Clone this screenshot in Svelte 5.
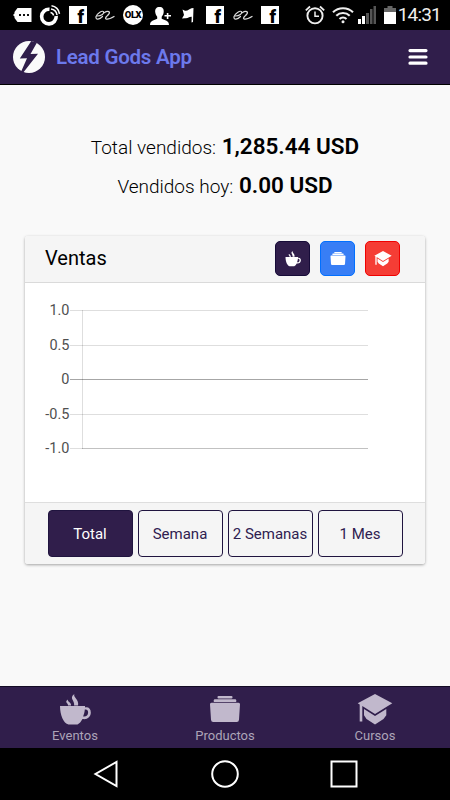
<script lang="ts">
	type IconName = 'cafe' | 'albums' | 'school';

	const shortcuts: { icon: IconName; label: string; tone: string }[] = [
		{ icon: 'cafe', label: 'Eventos', tone: 'dark' },
		{ icon: 'albums', label: 'Productos', tone: 'blue' },
		{ icon: 'school', label: 'Cursos', tone: 'red' }
	];

	const ranges = ['Total', 'Semana', '2 Semanas', '1 Mes'];
	let range = $state('Total');

	const ticks = [
		{ label: '1.0', y: 27.5 },
		{ label: '0.5', y: 62.5 },
		{ label: '0', y: 96.5 },
		{ label: '-0.5', y: 131.5 },
		{ label: '-1.0', y: 165.5 }
	];
</script>

{#snippet icon(name: IconName)}
	<svg viewBox="0 0 36 32" fill="currentColor" aria-hidden="true">
		{#if name === 'cafe'}
			<path d="M3 12h25v1.500c3.500-.8 5.800 1.300 5.800 5 0 4.500-3.500 7.300-8.300 6.500-1.500 2.700-3 4.500-5 5.500h-9C6.500 29.500 3 21 3 12Zm24.800 3.500c-.2 2.600-.8 4.800-1.700 7 3 .5 5-1.200 5-4 0-2.300-1.300-3.500-3.300-3Z" fill-rule="evenodd" />
			<path d="M17.300 0c-1.200 3.700 4.800 5.200 3.800 11.500h-4c1-5-5.500-7 .2-11.500ZM10.800 5.500c-.5 2.500 4 3 3.200 6h-3c.5-2.200-4-3.200-.2-6Z" />
		{:else if name === 'albums'}
			<rect x="10.500" y="2" width="15" height="2.500" rx="1" />
			<path d="M7.800 5.200h20.400q1 0 1 1V8H6.800V6.200q0-1 1-1Z" />
			<path d="M4.500 8.800h27q1.600 0 1.500 1.500l-1 15.500q-.2 2.200-2.200 2.200H6.200Q4.200 28 4 25.800L3 10.300q-.1-1.500 1.500-1.500Z" />
		{:else}
			<path d="M18 0 35.300 9.300 18 20 5.300 12v15.500H2.700V10.500L.7 9.300Z" />
			<path d="M7 15 18 22l11.300-7v6.300L26.500 25 18 30.500 9.500 25 7 21.300Z" />
		{/if}
	</svg>
{/snippet}

{#snippet facebook()}
	<svg viewBox="0 0 24 24" aria-hidden="true">
		<rect x="3" y="3" width="18" height="18" fill="#fff" />
		<text class="facebook" x="11.500" y="19.500">f</text>
	</svg>
{/snippet}

{#snippet squiggle()}
	<svg viewBox="0 0 24 24" fill="none" stroke="#ddd" stroke-linecap="round" aria-hidden="true">
		<path d="M4.500 13c4 0 7-2.500 6-4.300-1.500-1.500-6.500 1.800-7.500 5-.6 3.500 3.500 2.800 6.500-.2" stroke-width="1.200" />
		<path d="M11.500 9.500c3.500-2.500 6.500-.5 4 2-1.500 1.600-4 3.500-2.500 4.500 2 .8 5.500-1 8-2.500" stroke-width="1.300" />
	</svg>
{/snippet}

<div class="screen">
	<div class="status">
		<div class="notices">
			<svg viewBox="0 0 24 24" aria-hidden="true">
				<path d="M6.500 5h14v14h-14l-3-4v-1.500L2 12l1.500-1.500V9Z" fill="#fff" />
				<path d="M8 11h2v2H8Zm4 0h2v2h-2Zm4 0h2v2h-2Z" fill="#111" />
			</svg>
			<svg viewBox="0 0 24 24" fill="none" stroke="#fff" aria-hidden="true">
				<path d="M11.500 6.300A7.300 7.300 0 1 0 18.200 13" stroke-width="3.600" />
				<path d="M12.500 9.500a3.500 3.500 0 0 1 3 3M13 6a7 7 0 0 1 6 6M13.500 2.800a9 9 0 0 1 8 8" stroke-width="1.500" />
			</svg>
			{@render facebook()}
			{@render squiggle()}
			<svg viewBox="0 0 24 24" aria-hidden="true">
				<circle cx="12" cy="12" r="10" fill="#fff" />
				<text class="olx" x="12" y="15.300" text-anchor="middle">OLX</text>
			</svg>
			<svg viewBox="0 0 24 24" fill="#fff" aria-hidden="true">
				<path d="M11.500 4c3.200 0 4.500 2 4.200 5-.2 2.200-1 3.500-2 4.700v2c3 1.300 7.300 1.800 7.300 6.300H2c0-4.500 4.300-5 7.200-6.300v-2c-1-1.200-1.700-2.500-2-4.700-.2-3 1.100-5 4.300-5Z" />
				<path d="M18.800 10v2h-2.300v1.600h2.300V16h1.600v-2.400H23V12h-2.600v-2Z" />
			</svg>
			<svg viewBox="0 0 24 24" fill="#fff" aria-hidden="true">
				<path d="m6.500 6.500 2.500 1.300c3 .5 3.800-1.800 6.500-2.600l2-.2-.5 14-1.500.4.200-5.600c-3-.2-3.700 2-6.700 1.400l-3 .3 2-3.500Z" />
			</svg>
			{@render facebook()}
			{@render squiggle()}
			{@render facebook()}
		</div>
		<div class="system">
			<svg class="alarm" viewBox="0 0 20 20" fill="none" stroke="#eee" aria-hidden="true">
				<circle cx="10" cy="10.800" r="7.600" stroke-width="1.900" />
				<path d="M10 6.500v4.800h4" stroke-width="1.500" />
				<path d="M.8 5.300 5 1.500M15 1.500l4.200 3.800" stroke-width="1.800" />
			</svg>
			<svg class="wifi" viewBox="0 0 22 18" fill="none" stroke="#eee" stroke-width="2.100" aria-hidden="true">
				<path d="M1 6.300a14.300 14.300 0 0 1 20 0M4.300 9.800a9.500 9.500 0 0 1 13.400 0M7.500 13a5 5 0 0 1 7 0" />
				<circle cx="11" cy="15.800" r="1.500" fill="#eee" stroke="none" />
			</svg>
			<svg class="signal" viewBox="0 0 18 18" aria-hidden="true">
				<path d="M0 13h3v5H0Zm4 -3h3v8H4Z" fill="#fff" />
				<path d="M8 7h3v11H8Zm4-4h2.500v15H12Zm3.500-3H18v18h-2.500Z" fill="#555" />
			</svg>
			<svg class="battery" viewBox="0 0 12 18" aria-hidden="true">
				<path d="M3.500 0h5v2H12v5H0V2h3.500Z" fill="#666" />
				<path d="M0 6h12v12H0Z" fill="#fff" />
			</svg>
			<time>14:31</time>
		</div>
	</div>

	<header>
		<svg class="logo" viewBox="0 0 32 32" aria-hidden="true">
			<circle cx="16" cy="16" r="16" fill="#fafafa" />
			<path d="M18.300 0 6.800 17.500l7.200-.2L7.500 32l2 .5L25 12.800l-7.500.3L24 1.500Z" fill="#301e4b" />
		</svg>
		<h1>Lead Gods App</h1>
		<button type="button" class="menu" aria-label="Menu">
			<svg viewBox="0 0 20 18" stroke="#fff" stroke-width="3.200" stroke-linecap="round" aria-hidden="true">
				<path d="M2 2.600h16M2 9h16M2 15.200h16" />
			</svg>
		</button>
	</header>

	<main>
		<p>Total vendidos: <b>1,285.44 USD</b></p>
		<p class="today">Vendidos hoy: <b>0.00 USD</b></p>

		<section class="card">
			<div class="card-head">
				<h2>Ventas</h2>
				{#each shortcuts as item}
					<button type="button" class="shortcut {item.tone}" aria-label={item.label}>
						{@render icon(item.icon)}
					</button>
				{/each}
			</div>

			<svg class="chart" viewBox="0 0 400 219">
				{#each ticks as tick}
					<text x="44.500" y={tick.y + 4.5} text-anchor="end">{tick.label}</text>
					<line class:zero={tick.label === '0'} x1="45" x2="343" y1={tick.y} y2={tick.y} />
				{/each}
				<line x1="57.500" x2="57.500" y1="27" y2="166" />
				<line x1="57" x2="343" y1="165.500" y2="165.500" />
			</svg>

			<div class="ranges">
				{#each ranges as name}
					<button type="button" class:active={range === name} onclick={() => (range = name)}>
						{name}
					</button>
				{/each}
			</div>
		</section>
	</main>

	<nav class="tabs">
		{#each shortcuts as item}
			<button type="button">
				{@render icon(item.icon)}
				<span>{item.label}</span>
			</button>
		{/each}
	</nav>

	<div class="softkeys">
		<svg viewBox="0 0 30 30" fill="none" stroke="#fff" stroke-width="2" aria-hidden="true">
			<path d="M25.500 3v24L4.500 15Z" />
		</svg>
		<svg viewBox="0 0 30 30" fill="none" stroke="#fff" stroke-width="2" aria-hidden="true">
			<circle cx="15" cy="15" r="12.800" />
		</svg>
		<svg viewBox="0 0 30 30" fill="none" stroke="#fff" stroke-width="2" aria-hidden="true">
			<rect x="2.500" y="2.500" width="25" height="25" />
		</svg>
	</div>
</div>

<style>
	:global(body) {
		margin: 0;
	}

	.screen {
		display: flex;
		flex-direction: column;
		width: 450px;
		height: 800px;
		overflow: hidden;
		color: #000;
		background: #f9f9f9;
		font-family: Roboto, sans-serif;
	}

	.screen * {
		box-sizing: border-box;
	}

	svg {
		display: block;
		flex: none;
	}

	button {
		padding: 0;
		border: 0;
		background: none;
		color: inherit;
		font: inherit;
		cursor: pointer;
	}

	.status {
		display: flex;
		justify-content: space-between;
		height: 30px;
		padding: 0 9px 0 10.5px;
		background: #000;
	}

	.notices,
	.system {
		display: flex;
		align-items: center;
	}

	.notices {
		gap: 3.5px;
	}

	.notices svg {
		width: 24px;
		height: 24px;
	}

	.facebook {
		font: 900 18px Roboto, sans-serif;
	}

	.olx {
		font: 900 9.5px Roboto, sans-serif;
		letter-spacing: -0.5px;
	}

	.alarm {
		width: 20px;
		height: 20px;
	}

	.wifi {
		width: 22px;
		height: 18px;
		margin-left: 7px;
	}

	.signal {
		width: 18px;
		height: 18px;
		margin-left: 4px;
	}

	.battery {
		width: 12px;
		height: 18px;
		margin: 0 2px 0 8px;
	}

	time {
		color: #eee;
		font-size: 19px;
		letter-spacing: -0.8px;
		line-height: 32px;
		white-space: nowrap;
	}

	header {
		display: flex;
		align-items: center;
		height: 55px;
		padding: 0 22px 0 13px;
		border-bottom: 1px solid #000;
		background: #301e4b;
	}

	.logo {
		width: 32px;
		height: 32px;
	}

	h1 {
		margin: 0 auto 0 11px;
		color: #6c79ec;
		font-size: 20.5px;
		font-weight: 600;
		letter-spacing: -0.25px;
	}

	.menu svg {
		width: 20px;
		height: 18px;
	}

	main {
		flex: 1;
		padding: 47px 25px 0;
	}

	p {
		margin: 0;
		font-size: 19px;
		font-weight: 300;
		line-height: 28px;
		text-align: center;
		white-space: nowrap;
	}

	p b {
		margin-left: 1px;
		font-size: 22.5px;
		font-weight: 600;
	}

	.today {
		margin: 9px 0 35px;
	}

	.card {
		overflow: hidden;
		height: 328px;
		border-radius: 3px;
		background: #fff;
		box-shadow: 0 1px 3px rgba(0, 0, 0, 0.35);
	}

	.card-head {
		display: flex;
		gap: 10px;
		align-items: center;
		height: 47px;
		padding: 0 25px 1px 20px;
		border-bottom: 1px solid #dadada;
		background: #f5f5f5;
	}

	h2 {
		margin: 0 auto 0 0;
		font-size: 20px;
		font-weight: 400;
		line-height: 24px;
		padding-bottom: 2px;
	}

	.shortcut {
		display: grid;
		place-items: center;
		width: 35px;
		height: 35px;
		border: 1px solid;
		border-radius: 5px;
		color: #fff;
	}

	.shortcut svg {
		width: 18px;
		height: 16px;
	}

	.dark {
		border-color: #160b38;
		background: #301e4b;
	}

	.blue {
		border-color: #006fff;
		background: #387ef5;
	}

	.red {
		border-color: #f00000;
		background: #f53d35;
	}

	.chart {
		width: 400px;
		height: 219px;
	}

	.chart text {
		fill: #505050;
		font-size: 14.5px;
	}

	.chart line {
		stroke: #000;
		stroke-opacity: 0.13;
		stroke-width: 1;
	}

	.chart .zero {
		stroke-opacity: 0.35;
	}

	.ranges {
		display: flex;
		gap: 5px;
		justify-content: center;
		height: 62px;
		padding-top: 7px;
		border-top: 1px solid #dedede;
		background: #f5f5f5;
	}

	.ranges button {
		width: 85px;
		height: 47px;
		border: 1px solid #20143f;
		border-radius: 4px;
		color: #2f2050;
		font-size: 15px;
		white-space: nowrap;
	}

	.ranges .active {
		color: #fff;
		background: #301e4b;
	}

	.tabs {
		display: flex;
		height: 62px;
		border-top: 1px solid #140b25;
		background: #301e4b;
	}

	.tabs button {
		display: flex;
		flex: 1;
		flex-direction: column;
		align-items: center;
		padding-top: 7px;
		color: #c1b8cc;
		font-size: 13px;
	}

	.tabs svg {
		width: 36px;
		height: 32px;
	}

	.tabs span {
		margin-top: 2px;
		color: #aca4b8;
		line-height: 16px;
	}

	.softkeys {
		display: flex;
		gap: 89px;
		align-items: center;
		justify-content: center;
		height: 52px;
		background: #000;
	}

	.softkeys svg {
		width: 30px;
		height: 30px;
	}
</style>
